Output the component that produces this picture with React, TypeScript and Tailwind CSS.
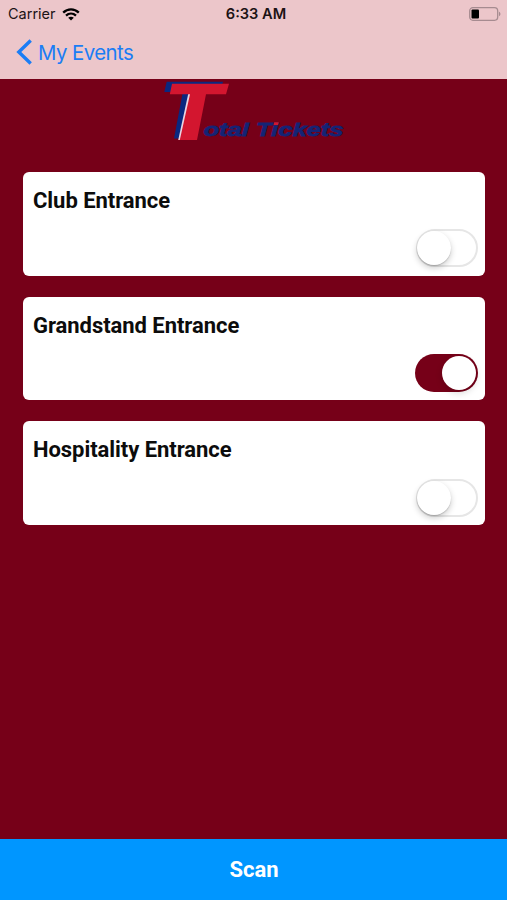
import React from 'react';

type Entrance = { name: string; on: boolean };

const entrances: Entrance[] = [
  { name: 'Club Entrance', on: false },
  { name: 'Grandstand Entrance', on: true },
  { name: 'Hospitality Entrance', on: false },
];

function Toggle({ on }: { on: boolean }) {
  return (
    <button
      role="switch"
      aria-checked={on}
      className={
        on
          ? 'flex h-[38px] w-[62.5px] items-center justify-end rounded-full bg-[#760018] pr-[2px]'
          : 'flex h-[38px] w-[62px] items-center justify-start rounded-full border-2 border-[#e6e6e6] bg-white'
      }
    >
      <span
        className={
          on
            ? 'size-[34px] rounded-full bg-white shadow-[0_3px_7px_rgba(0,0,0,0.15)]'
            : '-ml-px size-[34px] rounded-full bg-white shadow-[0_3px_6px_rgba(0,0,0,0.2),0_1px_1px_rgba(0,0,0,0.16)]'
        }
      />
    </button>
  );
}

function StatusBar() {
  return (
    <div className="grid h-7 grid-cols-3 items-center pr-[6px] pl-2 text-[15px] leading-none text-[#1c1315]">
      <div className="flex items-center gap-[6px]">
        <span className="text-[14.5px]">Carrier</span>
        <svg width="18" height="13" viewBox="0 0 18 13" fill="none" stroke="#000" strokeWidth="2.3">
          <path d="M1.2 4.6C5.6 0.3 12.4 0.3 16.8 4.6" />
          <path d="M4 7.7C6.9 5 11.1 5 14 7.7" />
          <path d="M6.2 9.8C7.8 8.3 10.2 8.3 11.8 9.8L9 12.6Z" fill="#000" stroke="none" />
        </svg>
      </div>
      <span className="pl-[3px] text-center text-[14.6px] font-semibold whitespace-nowrap">6:33 AM</span>
      <svg className="justify-self-end" width="32" height="14" viewBox="0 0 32 14">
        <rect x="0.7" y="0.7" width="28" height="12.6" rx="3.2" fill="none" stroke="#a68b90" strokeWidth="1.3" />
        <rect x="2.5" y="2.5" width="7.5" height="9" rx="1" fill="#000" />
        <path d="M30 4.8C31.9 5.5 31.9 8.5 30 9.2Z" fill="#a68b90" />
      </svg>
    </div>
  );
}

function Logo() {
  return (
    <svg className="ml-[163px] block" width="183" height="62" viewBox="163 79 183 62" role="img">
      <path d="M166.7 81.7H223L220 92H193L184 138.5H174L182.8 92H164.3Z" fill="#0a2880" />
      <path d="M188.2 94H191L181 140H178.2Z" fill="#e9d5e2" />
      <path d="M172 83.7H229L226 94.3H206L197 140H179.8L190 94.3H169.8Z" fill="#d3162f" />
      <text
        x="203.5"
        y="135.8"
        textLength="140"
        lengthAdjust="spacingAndGlyphs"
        fill="#142475"
        stroke="#142475"
        strokeWidth="0.8"
        className="font-['Liberation_Sans',sans-serif] text-[19px] font-bold italic"
      >
        otal Tickets
      </text>
      <path d="M274.2 122.3H278.8L278.1 124.9H273.5Z" fill="#d3162f" />
    </svg>
  );
}

export default function App() {
  return (
    <div className="flex h-[900px] w-[507px] flex-col overflow-hidden bg-[#760018] font-['Inter',sans-serif]">
      <header className="h-[79px] shrink-0 bg-[#ecc6ca]">
        <StatusBar />
        <nav className="flex h-12 items-center gap-[5px] pl-4 text-[#1b7df5]">
          <svg width="17" height="26" viewBox="0 0 17 26" fill="none" stroke="currentColor" strokeWidth="3.4">
            <path d="M14.7 1.5L2.8 13L14.7 24.5" />
          </svg>
          <span className="pt-[2px] text-[20.4px] leading-none tracking-[-0.55px]">My Events</span>
        </nav>
      </header>
      <main className="flex-1">
        <Logo />
        <div className="mt-[31px] flex flex-col gap-[21px] pr-[22px] pl-[23px] font-['Roboto',sans-serif]">
          {entrances.map((entrance) => (
            <section
              key={entrance.name}
              className="flex h-[103.7px] flex-col justify-between rounded-[6px] bg-white pt-4 pr-[7.5px] pb-[8.5px] pl-[10px]"
            >
              <h2 className="text-[22px] leading-[26px] font-bold tracking-[-0.05px] text-[#0c0c0c]">
                {entrance.name}
              </h2>
              <div className="flex justify-end">
                <Toggle on={entrance.on} />
              </div>
            </section>
          ))}
        </div>
      </main>
      <button className="h-[61px] shrink-0 bg-[#0096ff] pl-px font-['Roboto',sans-serif] text-[22px] font-bold text-white">
        Scan
      </button>
    </div>
  );
}
